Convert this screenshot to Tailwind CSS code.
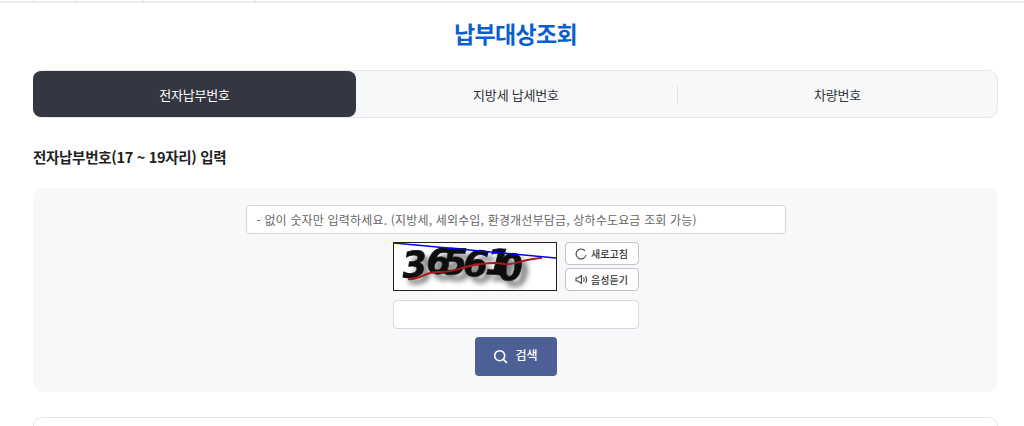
<!DOCTYPE html>
<html lang="ko">
<head>
  <meta charset="UTF-8">
  <title>납부대상조회</title>
  <script src="https://cdn.jsdelivr.net/npm/@tailwindcss/browser@4"></script>
</head>
<body class="bg-white h-[426px] overflow-hidden font-['Noto_Sans_CJK_KR','Noto_Sans',sans-serif] text-[#333]">
  <div class="h-[3px] border-b-2 border-[#ececec] pl-[33px] flex">
    <div class="w-[43px] h-[1px] border-l border-[#ddd]"></div>
    <div class="w-[67px] h-[1px] border-l border-[#ddd]"></div>
    <div class="w-[112px] h-[1px] border-l border-[#ddd]"></div>
    <div class="w-[112px] h-[1px] border-l border-[#ddd]"></div>
  </div>

  <main class="ml-[33px] w-[965px]">
    <h1 class="h-[67px] pt-[12px] text-center text-[23px] leading-[36px] font-bold tracking-[-0.7px] text-[#0a5fcf]">납부대상조회</h1>

    <div class="h-[48px] flex bg-[#f7f8fa] border border-[#e3e5e8] rounded-[10px] text-[13px] tracking-[-0.2px] text-[#333]">
      <div class="-ml-px w-[323px] h-[46px] pt-px flex items-center justify-center bg-[#343642] rounded-[8px] text-white">전자납부번호</div>
      <div class="w-[322px] pt-px pr-[2px] flex items-center justify-center relative">
        지방세 납세번호
        <span class="absolute right-0 top-[15px] h-[18px] border-r border-[#dfe1e4]"></span>
      </div>
      <div class="flex-1 pt-px flex items-center justify-center">차량번호</div>
    </div>

    <h2 class="mt-[28px] h-[23px] text-[14.5px] leading-[22px] font-bold tracking-[-0.3px] text-[#222]">전자납부번호(17 ~ 19자리) 입력</h2>

    <section class="mt-[19px] h-[204px] bg-[#f7f8fa] rounded-[10px] pt-[17px] flex flex-col items-center">
      <div class="w-[540px] h-[29px] bg-white border border-[#d5d7db] rounded-[4px] pl-[10px] text-[12px] tracking-[0.18px] leading-[27px] text-[#666]">- 없이 숫자만 입력하세요. (지방세, 세외수입, 환경개선부담금, 상하수도요금 조회 가능)</div>

      <div class="mt-[8px] w-[246px] flex gap-[8px]">
        <svg class="w-[164px] h-[49px] shrink-0 bg-white border border-[#222]" viewBox="0 0 162 47">
          <defs>
            <filter id="shadow" x="-10%" y="-20%" width="130%" height="160%">
              <feDropShadow dx="6" dy="6" stdDeviation="2.6" flood-color="#888"/>
            </filter>
          </defs>
          <text filter="url(#shadow)" fill="#111" stroke="#111" stroke-width="0.8" font-family="DejaVu Sans, sans-serif" font-weight="700" font-style="italic" font-size="36"
            x="9 31 48 68 91 105" y="35 29 31 32 31 38" rotate="-4 8 2 6 4 -4">365610</text>
          <path d="M14 36 C24 38 32 28 44 29 S62 26 76 23 S100 19 110 21 S132 15 148 15" fill="none" stroke="#b01818" stroke-width="2"/>
          <path d="M0 0 L162 15" stroke="#0000f0" stroke-width="1.5"/>
        </svg>
        <div class="flex flex-col gap-[3px]">
          <button class="w-[74px] h-[23px] flex items-center justify-center gap-[4px] bg-white border border-[#bfc2c7] rounded-[4px] text-[10px] font-medium text-[#333]">
            <svg class="w-[12px] h-[12px]" viewBox="0 0 12 12" fill="none" stroke="#444" stroke-width="1.1"><path d="M10 2.8 A5 5 0 1 0 11 7"/></svg>
            새로고침
          </button>
          <button class="w-[74px] h-[23px] flex items-center justify-center gap-[3px] bg-white border border-[#bfc2c7] rounded-[4px] text-[10px] font-medium text-[#333]">
            <svg class="w-[13px] h-[13px]" viewBox="0 0 13 12" fill="none" stroke="#444" stroke-width="1.1"><path d="M1 4.5 H3 L6.5 2 V10 L3 7.5 H1 Z M8.5 4 Q9.8 6 8.5 8 M10.5 2.5 Q12.6 6 10.5 9.5"/></svg>
            음성듣기
          </button>
        </div>
      </div>

      <div class="mt-[9px] w-[246px] h-[29px] bg-white border border-[#d5d7db] rounded-[4px]"></div>

      <button class="mt-[8px] w-[82px] h-[39px] flex items-center justify-center gap-[7px] bg-[#4d6095] rounded-[4px] text-[12px] font-medium text-white">
        <svg class="w-[15px] h-[15px]" viewBox="0 0 15 15" fill="none" stroke="#fff" stroke-width="1.6"><circle cx="6.7" cy="6.7" r="5"/><path d="M10.4 10.4 L14 14"/></svg>
        <span class="-mt-[3px]">검색</span>
      </button>
    </section>

    <div class="mt-[25px] h-[9px] bg-white border border-b-0 border-[#e3e5e8] rounded-t-[10px]"></div>
  </main>
</body>
</html>
